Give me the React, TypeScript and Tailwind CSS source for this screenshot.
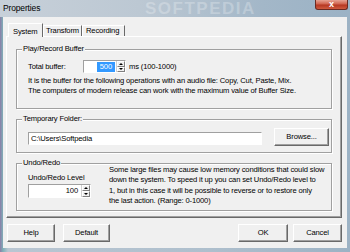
const font = { fontFamily: '"Liberation Sans", Arial, sans-serif', letterSpacing: '-0.15px' };

function Btn({ label, w }: { label: string; w: string }) {
  return (
    <div
      className={`${w} h-[18px] flex items-center justify-center border border-t-white border-l-white border-r-[#696969] border-b-[#696969] shadow-[inset_-1px_-1px_0_#a0a0a0] bg-[#f0f0f0] text-[7.6px] text-black`}
    >
      {label}
    </div>
  );
}

function Spin() {
  return (
    <div className="w-[9px] h-full flex flex-col border-l border-[#d0d0d0]">
      <div className="flex-1 flex items-center justify-center border border-t-white border-l-white border-r-[#808080] border-b-[#808080] bg-[#f0f0f0]">
        <div className="w-0 h-0 border-x-[2px] border-x-transparent border-b-[2px] border-b-black" />
      </div>
      <div className="flex-1 flex items-center justify-center border border-t-white border-l-white border-r-[#808080] border-b-[#808080] bg-[#f0f0f0]">
        <div className="w-0 h-0 border-x-[2px] border-x-transparent border-t-[2px] border-t-black" />
      </div>
    </div>
  );
}

function Group({ title, h, children }: { title: string; h: string; children: React.ReactNode }) {
  return (
    <div className={`relative ${h} border border-[#a0a0a0] shadow-[1px_1px_0_#fff,inset_1px_1px_0_#fff]`}>
      <span className="absolute -top-[6px] left-[5px] bg-[#f0f0f0] px-[1px] text-[7.6px] leading-[10px]">{title}</span>
      {children}
    </div>
  );
}

export default function App() {
  return (
    <div
      className="w-[350px] h-[252px] flex flex-col overflow-hidden bg-[linear-gradient(90deg,#8a7ea8_0px,#7fb0b8_3px,#b9c6d2_8px,#aebfcd_60%,#9cb2c4_100%)]"
      style={font}
    >
      {/* title bar */}
      <div className="relative h-[17px] flex items-start bg-[linear-gradient(90deg,#c7d0d9_0%,#bcc8d3_40%,#a3b7c8_75%,#9bb2c5_100%)]">
        <span className="ml-[3px] mt-[3px] text-[8.5px] leading-[10px] text-black">Properties</span>
        <span className="absolute left-[145px] top-0 text-[17px] font-bold tracking-[1.5px] leading-[17px] text-white/25">SOFTPEDIA</span>
        <div className="absolute right-[2px] top-0 w-[33px] h-[10px] rounded-b-[3px] border border-t-0 border-[#6b2a22] bg-[linear-gradient(180deg,#e6a393_0%,#d0624d_45%,#b53722_55%,#cf5a3e_100%)] flex items-center justify-center">
          <span className="text-[9px] leading-[9px] font-bold text-white">x</span>
        </div>
      </div>

      {/* client area */}
      <div className="mx-[3px] h-[231px] bg-[#f0f0f0] text-black flex flex-col">
        {/* tabs */}
        <div className="mt-[6px] ml-[5px] h-[13px] flex items-end text-[7.6px]">
          <div className="relative z-10 h-[14px] -mb-[1px] w-[35px] pl-[4px] pt-[2px] bg-[#f0f0f0] border-t border-l border-white border-r border-r-[#696969]">
            System
          </div>
          <div className="h-[11px] w-[39px] pl-[2px] leading-[10px] border-t border-l border-white border-r border-r-[#696969]">
            Transform
          </div>
          <div className="h-[11px] w-[43px] pl-[3px] leading-[10px] border-t border-l border-white border-r border-r-[#696969]">
            Recording
          </div>
        </div>

        {/* tab page */}
        <div className="ml-[3px] w-[336px] h-[182px] border border-t-white border-l-white border-r-[#696969] border-b-[#696969] shadow-[inset_-1px_-1px_0_#a0a0a0] px-[9px] pt-[12px] flex flex-col gap-[10px]">
          <Group title="Play/Record Buffer" h="h-[60px]">
            <div className="ml-[11px] mt-[10px] flex items-center h-[13px] text-[7.6px]">
              <span className="w-[55px]">Total buffer:</span>
              <div className="w-[43px] h-[13px] flex border border-t-[#a0a0a0] border-l-[#a0a0a0] border-r-white border-b-white bg-white">
                <div className="flex-1 flex items-center justify-end pr-[1px]">
                  <span className="bg-[#3399ff] text-white leading-[10px] px-[3px]">500</span>
                </div>
                <Spin />
              </div>
              <span className="ml-[3px]">ms (100-1000)</span>
            </div>
            <p className="ml-[11px] mt-[3px] text-[7.6px] leading-[10px] whitespace-nowrap">
              It is the buffer for the following operations with an audio file: Copy, Cut, Paste, Mix.
              <br />
              The computers of modern release can work with the maximum value of Buffer Size.
            </p>
          </Group>

          <Group title="Temporary Folder:" h="h-[34px]">
            <div className="ml-[11px] mt-[10px] flex items-center text-[7.6px]">
              <div className="w-[234px] h-[13px] mt-[1px] flex items-center pl-[2px] border border-t-[#a0a0a0] border-l-[#a0a0a0] border-r-white border-b-white bg-white">
                C:\Users\Softpedia
              </div>
              <div className="ml-[12px] -mt-[2px]">
                <Btn label="Browse..." w="w-[55px]" />
              </div>
            </div>
          </Group>

          <Group title="Undo/Redo" h="h-[48px]">
            <div className="flex text-[7.6px]">
              <div className="ml-[11px] mt-[9px] w-[70px] flex flex-col">
                <span className="leading-[10px]">Undo/Redo Level</span>
                <div className="mt-[1px] w-[63px] h-[14px] flex border border-t-[#a0a0a0] border-l-[#a0a0a0] border-r-white border-b-white bg-white">
                  <div className="flex-1 flex items-center justify-end pr-[3px]">100</div>
                  <Spin />
                </div>
              </div>
              <p className="ml-[11px] mt-[1px] text-[7.6px] leading-[10.3px] whitespace-nowrap">
                Some large files may cause low memory conditions that could slow
                <br />
                down the system. To speed it up you can set Undo/Redo level to
                <br />
                1, but in this case it will be possible to reverse or to restore only
                <br />
                the last action. (Range: 0-1000)
              </p>
            </div>
          </Group>
        </div>

        {/* bottom buttons */}
        <div className="mt-[6px] flex items-center px-[4px]">
          <Btn label="Help" w="w-[48px]" />
          <div className="ml-[8px]">
            <Btn label="Default" w="w-[47px]" />
          </div>
          <div className="ml-auto mr-[1px] flex gap-[5px]">
            <Btn label="OK" w="w-[50px]" />
            <Btn label="Cancel" w="w-[49px]" />
          </div>
        </div>
      </div>
    </div>
  );
}
